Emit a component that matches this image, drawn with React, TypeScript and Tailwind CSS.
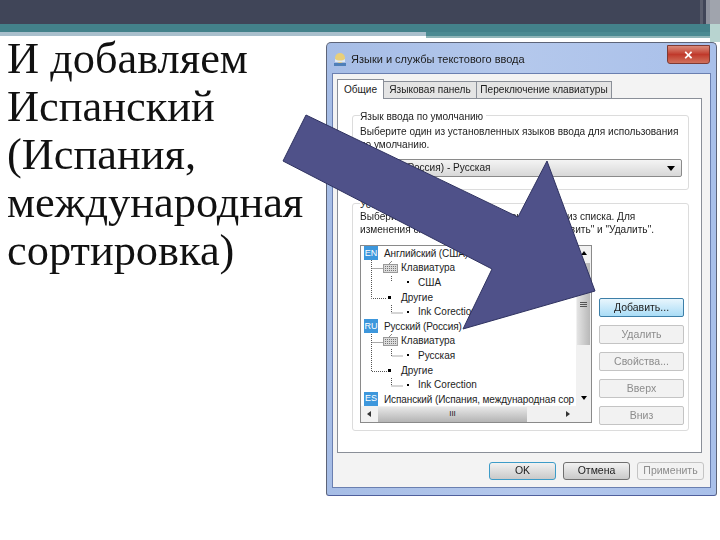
const treeRows = [
  { kind: "lang", badge: "EN", label: "Английский (США)" },
  { kind: "group", label: "Клавиатура", icon: true },
  { kind: "item", label: "США" },
  { kind: "group", label: "Другие" },
  { kind: "item", label: "Ink Corection" },
  { kind: "lang", badge: "RU", label: "Русский (Россия)" },
  { kind: "group", label: "Клавиатура", icon: true },
  { kind: "item", label: "Русская" },
  { kind: "group", label: "Другие" },
  { kind: "item", label: "Ink Corection" },
  { kind: "lang", badge: "ES", label: "Испанский (Испания, международная сор" },
];

const sideButtons = [
  { label: "Добавить...", active: true },
  { label: "Удалить" },
  { label: "Свойства..." },
  { label: "Вверх" },
  { label: "Вниз" },
];

function KeyboardIcon() {
  return (
    <svg width="15" height="13" viewBox="0 0 15 13" className="shrink-0">
      <path d="M9 0 L6 3" stroke="#8a8a8a" fill="none" />
      <rect x="0.5" y="3.5" width="14" height="8" fill="#dcdcdc" stroke="#9a9a9a" />
      <path d="M2 5.5 H13 M2 7.5 H13 M2 9.5 H13" stroke="#777" strokeDasharray="1 1" />
    </svg>
  );
}

function TreeRow({ row }: { row: (typeof treeRows)[number] }) {
  if (row.kind === "lang") {
    return (
      <div className="flex h-[14.6px] items-center pl-[3px] tracking-[-0.1px] whitespace-nowrap">
        <span className="mr-[6px] flex h-[14px] w-[14px] shrink-0 items-center justify-center bg-[#3d97dc] text-[9px] text-white">
          {row.badge}
        </span>
        {row.label}
      </div>
    );
  }
  if (row.kind === "group") {
    return (
      <div className="flex h-[14.6px] items-center pl-[22px] whitespace-nowrap">
        {row.icon ? (
          <span className="mr-[4px] w-[14px]">
            <KeyboardIcon />
          </span>
        ) : (
          <span className="mr-[10px] ml-[5px] h-[3px] w-[3px] bg-black" />
        )}
        {row.label}
      </div>
    );
  }
  return (
    <div className="flex h-[14.6px] items-center pl-[46px] whitespace-nowrap">
      <span className="mr-[9px] h-[2px] w-[2px] bg-black" />
      {row.label}
    </div>
  );
}

function SideButton({ label, active }: { label: string; active?: boolean }) {
  return (
    <div
      className={
        active
          ? "flex h-[19px] items-center justify-center rounded-[2px] border border-[#3d7fa8] bg-gradient-to-b from-[#e8f6fd] to-[#a9dcf6] text-[#222]"
          : "flex h-[19px] items-center justify-center rounded-[2px] border border-[#c4c4c4] bg-[#f2f2f2] text-[#8c8c8c]"
      }
    >
      {label}
    </div>
  );
}

export default function App() {
  return (
    <div className="relative h-[540px] w-[720px] overflow-hidden bg-white font-['Liberation_Sans',sans-serif]">
      <div className="h-[24px] bg-[#404558]" />
      <div className="h-[8px] bg-[#43818a]" />
      <div className="flex h-[4px]">
        <div className="w-[426px] bg-[#a9bfcc]" />
        <div className="flex-1 bg-[#4b8a92]" />
      </div>

      {/* right edge stripes of the slide theme */}
      <div className="absolute top-[36px] left-[426px] h-[2px] w-[294px] bg-[#8fb5b8]" />
      <div className="absolute top-0 left-[700px] h-[24px] w-[3px] bg-[#5a5e6e]" />
      <div className="absolute top-0 left-[706px] h-[24px] w-[4px] bg-[#8f939f]" />
      <div className="absolute top-0 left-[710px] h-[24px] w-[10px] bg-[#a0a4ad]" />
      <div className="absolute top-[24px] left-[710px] h-[18px] w-[10px] bg-[#b8d4d0]" />

      <div className="flex pt-[6px]">
        <div className="mt-[-8px] h-[470px] w-[326px] pl-[7px] font-['Liberation_Serif',serif] text-[44.4px] leading-[48px] text-[#111] blur-[0.3px]">
          И добавляем Испанский (Испания, международная сортировка)
        </div>

        {/* dialog */}
        <div className="flex h-[454px] w-[391px] flex-col rounded-t-[5px] rounded-b-[3px] border border-[#5d6478] border-b-[#4f5f9c] bg-gradient-to-r from-[#a6bde6] via-[#b4c8ec] to-[#a9c0ea] px-[5px] pb-[7px] text-[10.1px] text-[#1c1c1c] blur-[0.3px]">
          <div className="flex h-[30px] shrink-0 items-center pt-[3px]">
            <svg width="16" height="16" viewBox="0 0 16 16" className="mr-[3px] shrink-0">
              <circle cx="8" cy="6" r="5" fill="#e8cf7a" />
              <path d="M3 7 C6 9 10 9 13 7 L13 10 L3 10 Z" fill="#dfe8f2" />
              <rect x="2" y="11" width="12" height="3" fill="#4f7fb8" />
            </svg>
            <span className="text-[11px]">Языки и службы текстового ввода</span>
            <div className="mt-[-11px] mr-[1px] ml-auto flex h-[19px] w-[43px] items-center justify-center rounded-b-[3px] border border-[#7d3a34] bg-gradient-to-b from-[#d98a7c] via-[#c0392b] to-[#d0705c]">
              <span className="text-[15px] leading-none font-bold text-white">×</span>
            </div>
          </div>

          <div className="flex flex-1 flex-col border border-[#6a7fb0] bg-[#f3f3f3] pt-[5px] pr-[8px] pl-[4px]">
            <div className="flex h-[20px] shrink-0 items-end border-b border-[#8a8f98]">
              <div className="z-10 mb-[-1px] flex h-[20px] w-[47px] items-center justify-center border border-b-0 border-[#8a8f98] bg-white">
                Общие
              </div>
              <div className="flex h-[17px] w-[93px] items-center justify-center border border-b-0 border-l-0 border-[#8a8f98] bg-[#e4e4e4] whitespace-nowrap">
                Языковая панель
              </div>
              <div className="flex h-[17px] w-[135px] items-center justify-center border border-b-0 border-l-0 border-[#8a8f98] bg-[#e4e4e4] whitespace-nowrap">
                Переключение клавиатуры
              </div>
            </div>

            <div className="flex h-[354px] shrink-0 flex-col gap-[13px] border border-t-0 border-[#8a8f98] bg-white pt-[16px] pr-[12px] pl-[14px]">
              <div className="relative h-[75px] shrink-0 rounded-[3px] border border-[#dcdcdc] pt-[9px] pr-[6px] pl-[7px]">
                <span className="absolute top-[-7px] left-[7px] bg-white pr-[3px]">
                  Язык ввода по умолчанию
                </span>
                <p className="leading-[13px]">
                  Выберите один из установленных языков ввода для использования по умолчанию.
                </p>
                <div className="mt-[8px] flex h-[18px] items-center justify-between rounded-[2px] border border-[#8a8a8a] bg-gradient-to-b from-[#f4f4f4] to-[#d8d8d8] pr-[6px] pl-[3px]">
                  <span>Русский (Россия) - Русская</span>
                  <span className="h-0 w-0 border-x-[4px] border-t-[5px] border-x-transparent border-t-black" />
                </div>
              </div>

              <div className="relative flex h-[228px] shrink-0 flex-col rounded-[3px] border border-[#dcdcdc] pt-[7px] pr-[4px] pl-[7px]">
                <span className="absolute top-[-7px] left-[7px] bg-white pr-[3px]">
                  Установленные службы
                </span>
                <p className="leading-[12.5px]">
                  Выберите службу для каждого языка ввода из списка. Для изменения списка используйте кнопки "Добавить" и "Удалить".
                </p>
                <div className="mt-[9px] flex gap-[7px]">
                  <div className="relative flex h-[178px] w-[232px] flex-col border border-[#8a8a8a] bg-white text-[10px]">
                    <div className="flex min-h-0 flex-1">
                      <div className="relative w-[215px] overflow-hidden">
                        {treeRows.map((row, i) => (
                          <TreeRow key={i} row={row} />
                        ))}
                        <svg width="60" height="160" viewBox="0 0 60 160" className="absolute top-0 left-0">
                          <path
                            d="M10.5 14 V52.5 H26 M10.5 22.5 H22 M30.5 30 V36 M30.5 59 V67 H42 M10.5 88 V125.5 H26 M10.5 96.5 H22 M30.5 103 V110 H42 M30.5 132 V140 H42"
                            stroke="#555"
                            strokeDasharray="1 1"
                            fill="none"
                          />
                        </svg>
                      </div>
                      <div className="flex w-[15px] flex-col items-center bg-[#f1f1f1]">
                        <span className="mt-[5px] h-0 w-0 border-x-[3.5px] border-b-[4px] border-x-transparent border-b-black" />
                        <div className="mt-[8px] flex h-[82px] w-[13px] flex-col items-center justify-center gap-[1px] bg-gradient-to-r from-[#e4e4e4] to-[#b8b8b8]">
                          <span className="h-px w-[7px] bg-[#555]" />
                          <span className="h-px w-[7px] bg-[#555]" />
                          <span className="h-px w-[7px] bg-[#555]" />
                        </div>
                        <span className="mt-auto mb-[6px] h-0 w-0 border-x-[3.5px] border-t-[4px] border-x-transparent border-t-black" />
                      </div>
                    </div>
                    <div className="flex h-[16px] shrink-0 items-center bg-[#f1f1f1]">
                      <span className="ml-[6px] h-0 w-0 border-y-[3px] border-r-[4px] border-y-transparent border-r-[#333]" />
                      <div className="ml-[7px] flex h-[15px] w-[149px] items-center justify-center bg-gradient-to-b from-[#e8e8e8] to-[#b4b4b4] text-[8px] leading-none">
                        III
                      </div>
                      <span className="ml-[39px] h-0 w-0 border-y-[3px] border-l-[4px] border-y-transparent border-l-[#333]" />
                    </div>
                  </div>

                  <div className="flex w-[86px] flex-col gap-[8px] pt-[53px] text-[10.5px]">
                    {sideButtons.map((b) => (
                      <SideButton key={b.label} label={b.label} active={b.active} />
                    ))}
                  </div>
                </div>
              </div>
            </div>

            <div className="mr-[-2px] flex shrink-0 justify-end gap-[7px] pt-[9px] text-[10.5px]">
              <div className="flex h-[18px] w-[67px] items-center justify-center rounded-[3px] border border-[#3d9cc8] bg-gradient-to-b from-[#f2f2f2] to-[#c9c9c9]">OK</div>
              <div className="flex h-[18px] w-[67px] items-center justify-center rounded-[3px] border border-[#707070] bg-gradient-to-b from-[#f2f2f2] to-[#c9c9c9]">Отмена</div>
              <div className="flex h-[18px] w-[67px] items-center justify-center rounded-[3px] border border-[#c4c4c4] bg-[#f2f2f2] text-[#8c8c8c]">Применить</div>
            </div>
          </div>
        </div>
      </div>

      {/* big arrow placed on top of the screenshot */}
      <svg width="720" height="540" viewBox="0 0 720 540" className="pointer-events-none absolute top-0 left-0">
        <polygon
          points="306,115 283,161 492,269 463,329 595,291 547,161 518,217"
          fill="#4f5189"
          stroke="#2f3260"
          strokeWidth="1"
        />
      </svg>
    </div>
  );
}
